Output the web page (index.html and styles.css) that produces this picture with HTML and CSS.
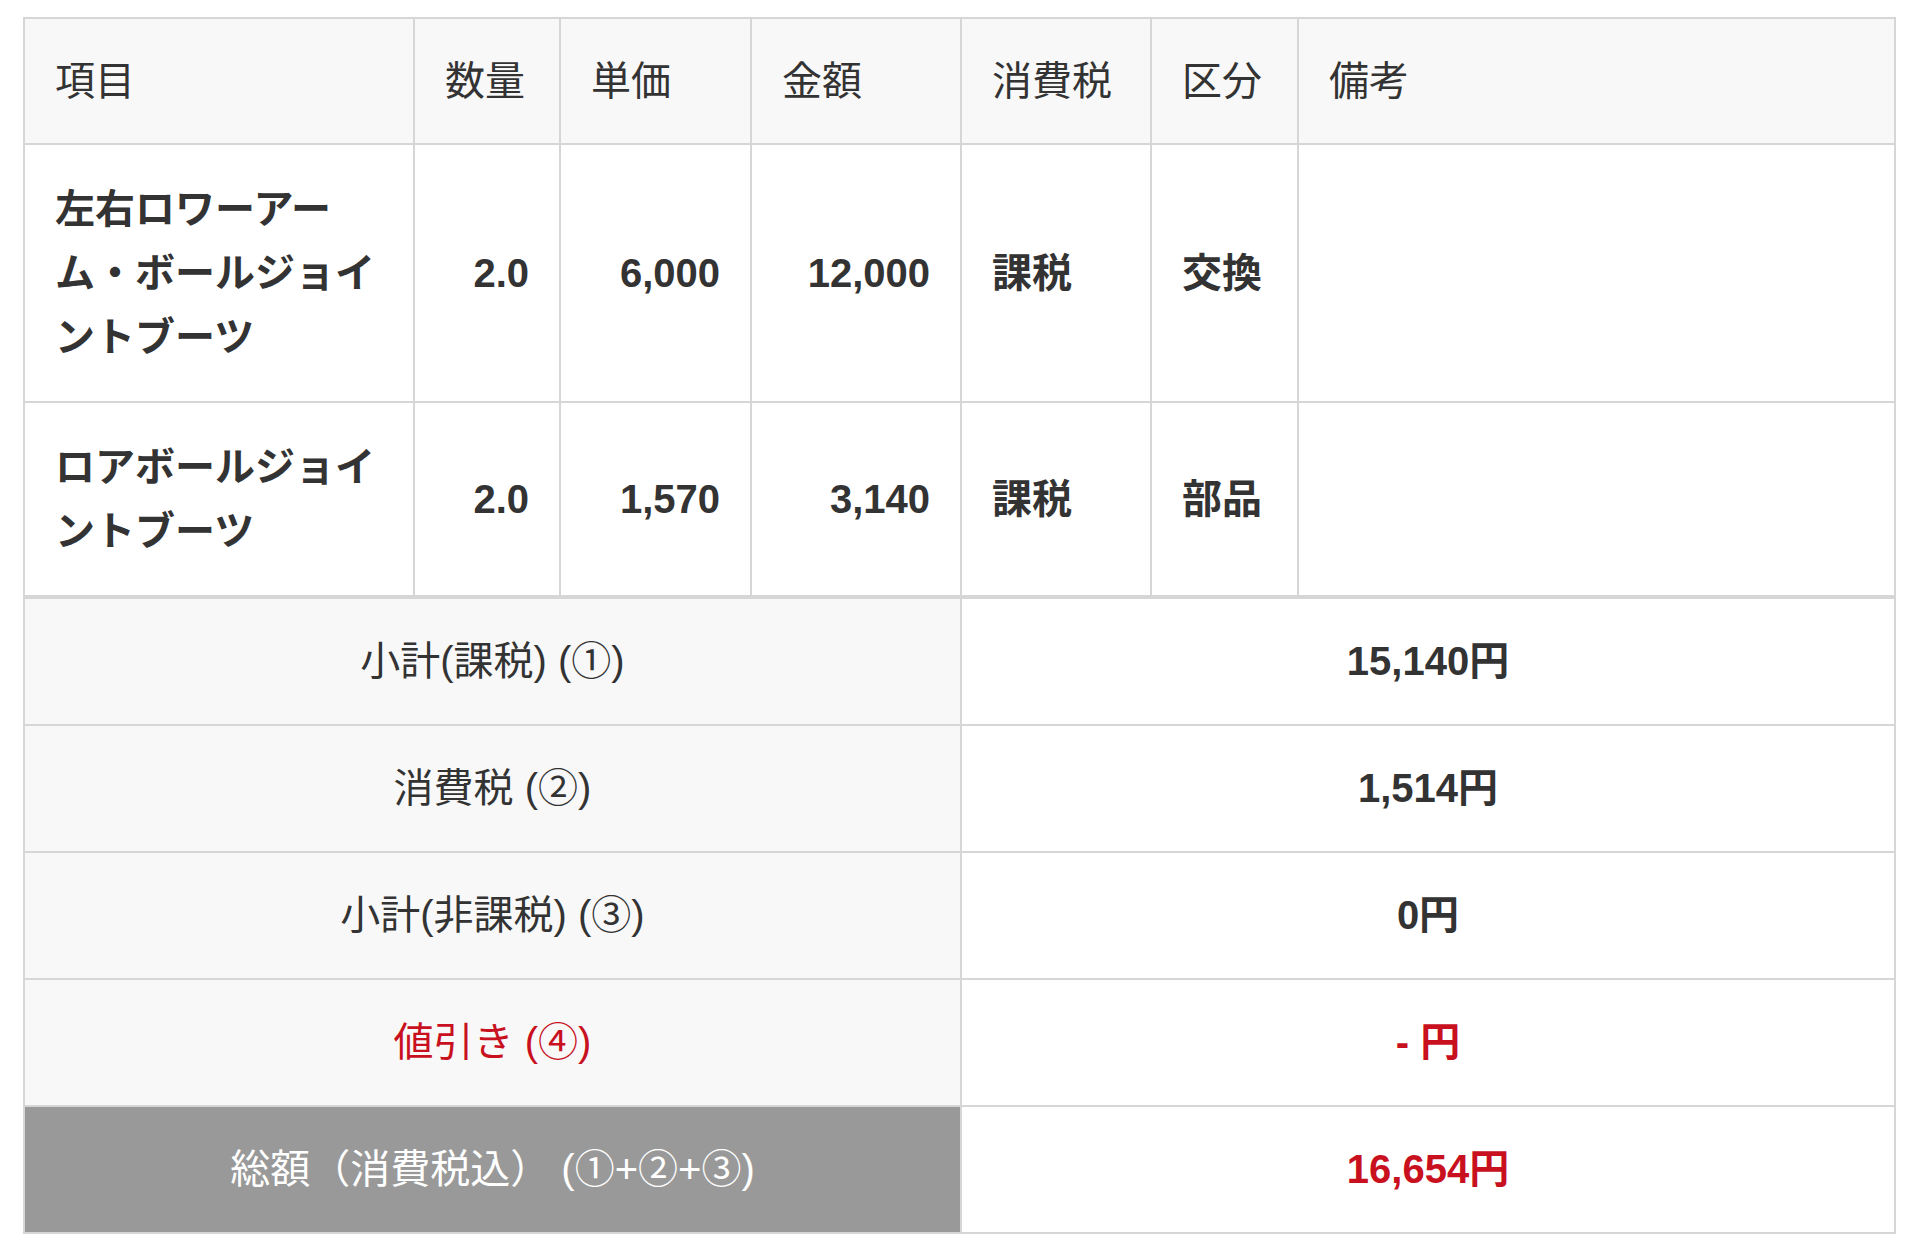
FILE: index.html
```html
<!DOCTYPE html>
<html lang="ja">
<head>
<meta charset="utf-8">
<title>見積明細</title>
<link rel="stylesheet" href="styles.css">
</head>
<body>
<div class="wrap">
  <table class="items">
    <colgroup>
      <col class="c-name">
      <col class="c-qty">
      <col class="c-unit">
      <col class="c-amount">
      <col class="c-tax">
      <col class="c-kind">
      <col class="c-note">
    </colgroup>
    <thead>
      <tr>
        <th>項目</th>
        <th>数量</th>
        <th>単価</th>
        <th>金額</th>
        <th>消費税</th>
        <th>区分</th>
        <th>備考</th>
      </tr>
    </thead>
    <tbody>
      <tr>
        <td class="name">左右ロワーアーム・ボールジョイントブーツ</td>
        <td class="num">2.0</td>
        <td class="num">6,000</td>
        <td class="num">12,000</td>
        <td class="txt">課税</td>
        <td class="txt">交換</td>
        <td></td>
      </tr>
      <tr>
        <td class="name">ロアボールジョイントブーツ</td>
        <td class="num">2.0</td>
        <td class="num">1,570</td>
        <td class="num">3,140</td>
        <td class="txt">課税</td>
        <td class="txt">部品</td>
        <td></td>
      </tr>
    </tbody>
  </table>
  <table class="summary">
    <colgroup>
      <col class="c-label">
      <col class="c-value">
    </colgroup>
    <tbody>
      <tr>
        <th>小計(課税) (①)</th>
        <td>15,140円</td>
      </tr>
      <tr>
        <th>消費税 (②)</th>
        <td>1,514円</td>
      </tr>
      <tr>
        <th>小計(非課税) (③)</th>
        <td>0円</td>
      </tr>
      <tr>
        <th class="red">値引き (④)</th>
        <td class="red">- 円</td>
      </tr>
      <tr class="total">
        <th>総額（消費税込） (①+②+③)</th>
        <td class="red">16,654円</td>
      </tr>
    </tbody>
  </table>
</div>
</body>
</html>
```

FILE: styles.css
```css
html, body {
  margin: 0;
  padding: 0;
  background: #ffffff;
}

body {
  font-family: "Liberation Sans", "Noto Sans CJK JP", sans-serif;
  color: #333333;
  font-size: 40px;
  line-height: 64px;
}

.wrap {
  padding: 17px 24px 0 23px;
}

table {
  width: 100%;
  border-collapse: collapse;
  table-layout: fixed;
}

th, td {
  border: 2px solid #d6d6d6;
  vertical-align: middle;
}

.items th {
  background: #f8f8f8;
  font-weight: normal;
  text-align: left;
  padding: 30px 30px;
  white-space: nowrap;
}

.items td {
  padding: 32px 30px;
  background: #ffffff;
}

.c-name { width: 390px; }
.c-qty { width: 146px; }
.c-unit { width: 191px; }
.c-amount { width: 210px; }
.c-tax { width: 190px; }
.c-kind { width: 147px; }

.c-label { width: 937px; }

.items td.name {
  font-weight: bold;
  line-break: strict;
}

.items td.num {
  font-weight: bold;
  text-align: right;
}

.items td.txt {
  font-weight: bold;
  text-align: left;
}

.summary th {
  background: #f8f8f8;
  font-weight: normal;
  text-align: center;
  padding: 30px 32px 31px;
}

.summary td {
  font-weight: bold;
  text-align: center;
  padding: 30px 32px 31px;
  background: #ffffff;
}

.summary .red {
  color: #c8101e;
}

.summary .total th {
  background: #999999;
  color: #ffffff;
}
```
